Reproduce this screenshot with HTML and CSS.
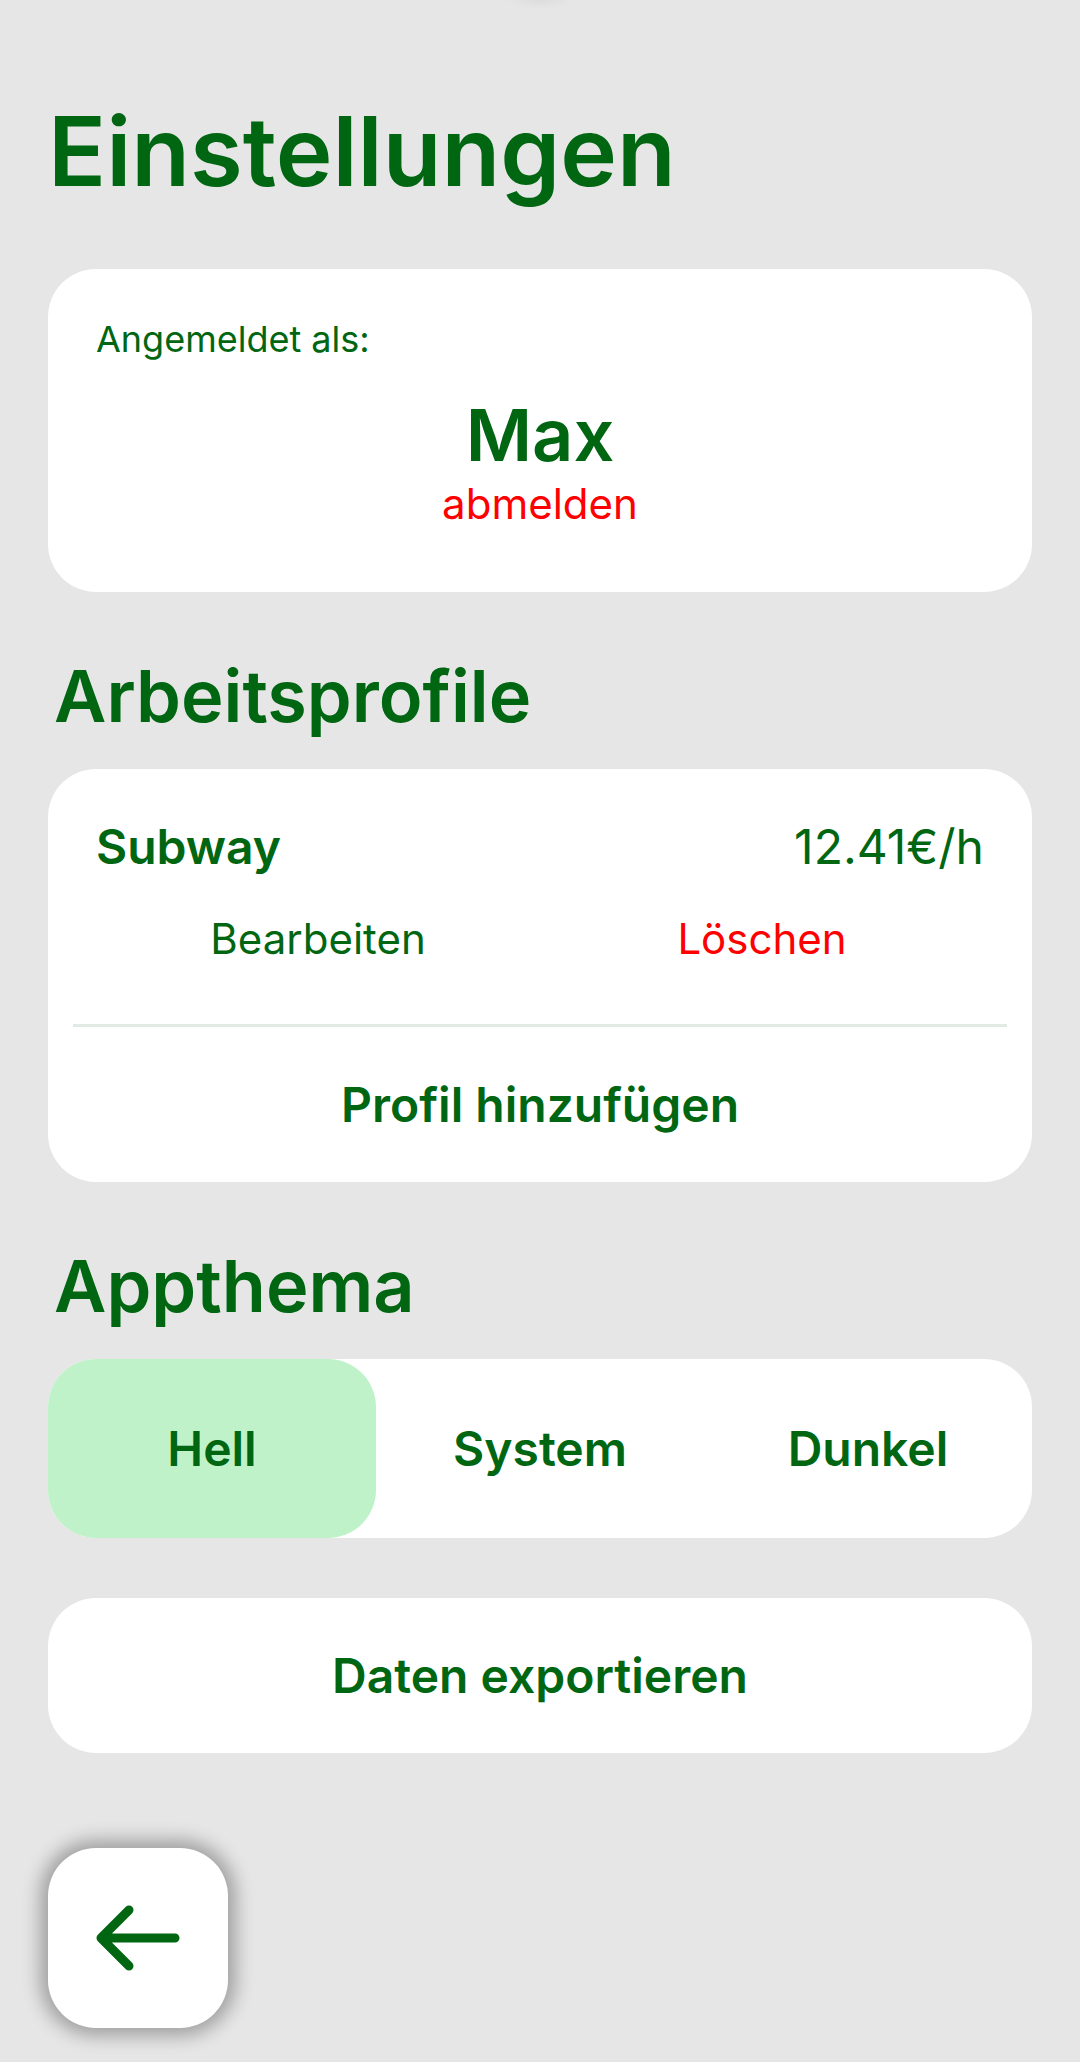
FILE: index.html
```html
<!DOCTYPE html>
<html lang="de">
<head>
<meta charset="utf-8">
<meta name="viewport" content="width=device-width, initial-scale=1">
<title>Einstellungen</title>
<link rel="stylesheet" href="styles.css">
</head>
<body>
<main class="page">
  <h1 class="title">Einstellungen</h1>

  <section class="card account">
    <p class="account-label">Angemeldet als:</p>
    <p class="account-name">Max</p>
    <button class="link-button danger" type="button">abmelden</button>
  </section>

  <h2 class="heading">Arbeitsprofile</h2>
  <section class="card profiles">
    <div class="profile-head">
      <h3 class="profile-name">Subway</h3>
      <span class="profile-wage">12.41€/h</span>
    </div>
    <div class="profile-actions">
      <button class="link-button" type="button">Bearbeiten</button>
      <button class="link-button danger" type="button">Löschen</button>
    </div>
    <hr class="divider">
    <button class="add-button" type="button">Profil hinzufügen</button>
  </section>

  <h2 class="heading">Appthema</h2>
  <div class="card themes">
    <button class="theme selected" type="button" aria-pressed="true">Hell</button>
    <button class="theme" type="button" aria-pressed="false">System</button>
    <button class="theme" type="button" aria-pressed="false">Dunkel</button>
  </div>

  <button class="card export" type="button">Daten exportieren</button>

  <button class="back" type="button" aria-label="Zurück">
    <svg class="back-icon" viewBox="0 0 84 66" fill="none" stroke="currentColor" stroke-width="9" stroke-linecap="round" stroke-linejoin="round" aria-hidden="true">
      <path d="M79 33H6M33 5L5 33L33 61"/>
      <path d="M5 33L16 28V38Z" fill="currentColor" stroke="none"/>
    </svg>
  </button>
</main>
</body>
</html>
```

FILE: styles.css
```css
* {
  box-sizing: border-box;
}

body {
  margin: 0;
  background: #e6e6e6 radial-gradient(ellipse 34px 9px at 50% 0, #dcdcdc, #e6e6e6) no-repeat;
  color: #006612;
  font-family: Inter, "Liberation Sans", sans-serif;
}

h1, h2, h3, p {
  margin: 0;
}

button {
  border: 0;
  padding: 0;
  background: none;
  color: inherit;
  font: inherit;
  cursor: pointer;
}

.page {
  display: flex;
  flex-direction: column;
  padding: 93px 48px 34px;
}

.title {
  font-size: 96px;
  line-height: 116px;
  font-weight: 600;
}

.card {
  border-radius: 48px;
  background: #fff;
}

.account {
  display: flex;
  flex-direction: column;
  align-items: center;
  margin-top: 60px;
  padding: 48px 48px 63px;
}

.account-label {
  align-self: flex-start;
  font-size: 36px;
  line-height: 44px;
}

.account-name {
  margin-top: 30px;
  font-size: 72px;
  line-height: 88px;
  font-weight: 600;
}

.link-button {
  font-size: 42px;
  line-height: 50px;
}

.danger {
  color: #f00;
}

.heading {
  margin: 60px 0 29px;
  padding-left: 6px;
  font-size: 72px;
  line-height: 88px;
  font-weight: 600;
}

.profile-head {
  display: flex;
  justify-content: space-between;
  padding: 48px 48px 0;
  font-size: 48px;
  line-height: 60px;
}

.profile-name {
  font-size: 48px;
  font-weight: 600;
}

.profile-actions {
  display: grid;
  grid-template-columns: 1fr 1fr;
  margin: 37px 48px 60px;
}

.divider {
  height: 3px;
  margin: 0 25px;
  border: 0;
  background: #e3e9e4;
}

.add-button {
  width: 100%;
  padding: 48px 0;
  font-size: 48px;
  line-height: 59px;
  font-weight: 600;
}

.themes {
  display: grid;
  grid-template-columns: repeat(3, 1fr);
}

.theme {
  border-radius: 48px;
  padding: 60px 0;
  font-size: 48px;
  line-height: 59px;
  font-weight: 600;
}

.selected {
  background: #c0f2ca;
}

.export {
  margin-top: 60px;
  padding: 48px 0;
  font-size: 48px;
  line-height: 59px;
  font-weight: 600;
  background: #fff;
}

.back {
  display: grid;
  place-items: center;
  width: 180px;
  height: 180px;
  margin-top: 95px;
  border-radius: 48px;
  background: #fff;
  box-shadow: 0 0 18px 8px rgba(0, 0, 0, 0.3);
}

.back-icon {
  width: 84px;
  height: 66px;
}
```
